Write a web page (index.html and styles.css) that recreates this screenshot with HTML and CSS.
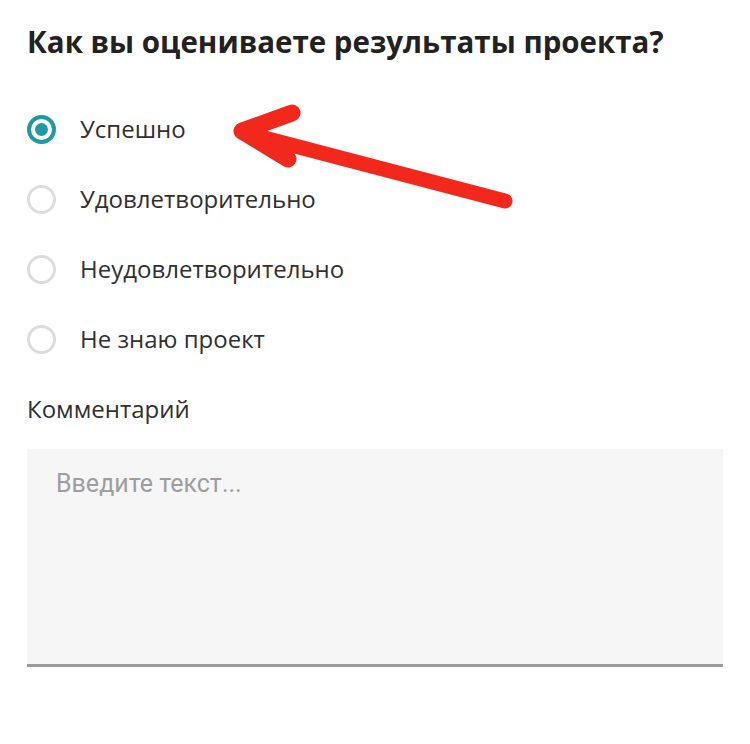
FILE: index.html
```html
<!DOCTYPE html>
<html lang="ru">
<head>
<meta charset="utf-8">
<link rel="stylesheet" href="styles.css">
</head>
<body>
<main class="form">
  <h1 class="question">Как вы оцениваете результаты проекта?</h1>
  <div class="options">
    <label class="option"><span class="radio checked"></span><span class="option-text">Успешно</span></label>
    <label class="option"><span class="radio"></span><span class="option-text">Удовлетворительно</span></label>
    <label class="option"><span class="radio"></span><span class="option-text">Неудовлетворительно</span></label>
    <label class="option"><span class="radio"></span><span class="option-text">Не знаю проект</span></label>
  </div>
  <div class="comment-label">Комментарий</div>
  <div class="textarea"><span class="placeholder">Введите текст...</span></div>
  <svg class="arrow" width="300" height="130" viewBox="0 0 300 130">
    <path d="M20 43 L283 112" fill="none" stroke="#f2281c" stroke-width="15" stroke-linecap="round"/>
    <path d="M70 24 L20 42 L66 70" fill="none" stroke="#f2281c" stroke-width="17" stroke-linecap="round" stroke-linejoin="round"/>
  </svg>
</main>
</body>
</html>
```
FILE: styles.css
```css
html, body {
  margin: 0;
  padding: 0;
  background: #ffffff;
}
.form {
  position: relative;
  padding: 22px 27px 0 27px;
  font-family: "Open Sans", "Noto Sans", sans-serif;
  color: #303030;
}
.question {
  margin: 0;
  font-size: 29.5px;
  line-height: 40px;
  font-weight: 700;
  color: #222222;
}
.options {
  margin-top: 32px;
  display: flex;
  flex-direction: column;
}
.option {
  height: 70px;
  display: flex;
  align-items: center;
  gap: 24px;
}
.radio {
  box-sizing: border-box;
  width: 29px;
  height: 29px;
  border-radius: 50%;
  border: 3px solid #dcdcdc;
  display: flex;
  align-items: center;
  justify-content: center;
  flex: none;
}
.radio.checked {
  border: 4px solid #1d9aa3;
}
.radio.checked::after {
  content: "";
  width: 13px;
  height: 13px;
  border-radius: 50%;
  background: #1d9aa3;
}
.option-text {
  font-size: 24px;
  line-height: 30px;
  color: #303030;
}
.comment-label {
  margin-top: 20px;
  font-size: 24px;
  line-height: 30px;
  color: #303030;
}
.textarea {
  box-sizing: border-box;
  margin-top: 25px;
  height: 218px;
  background: #f6f6f6;
  border-bottom: 3px solid #9c9c9c;
  padding: 20px 29px;
}
.placeholder {
  font-family: "Roboto", "Open Sans", sans-serif;
  font-size: 25px;
  line-height: 30px;
  color: #9d9d9d;
}
.arrow {
  position: absolute;
  left: 222px;
  top: 89px;
}
```
